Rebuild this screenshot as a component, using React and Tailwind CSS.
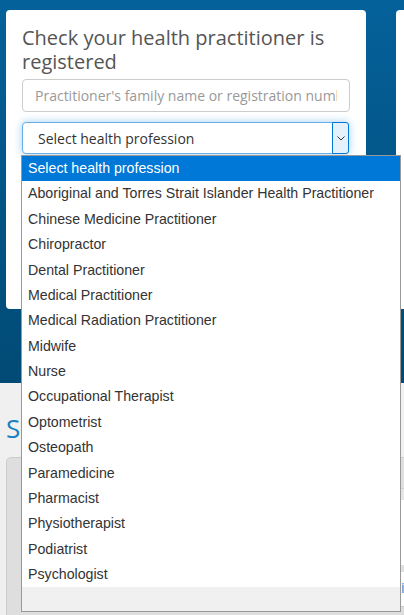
import React from "react";

const items = [
  "Select health profession",
  "Aboriginal and Torres Strait Islander Health Practitioner",
  "Chinese Medicine Practitioner",
  "Chiropractor",
  "Dental Practitioner",
  "Medical Practitioner",
  "Medical Radiation Practitioner",
  "Midwife",
  "Nurse",
  "Occupational Therapist",
  "Optometrist",
  "Osteopath",
  "Paramedicine",
  "Pharmacist",
  "Physiotherapist",
  "Podiatrist",
  "Psychologist",
];

export default function App() {
  return (
    <div className="relative w-[404px] h-[615px] overflow-hidden bg-[#f0f0f0] font-['Open_Sans',sans-serif]">
      {/* Blue hero band */}
      <div className="h-[383px] bg-gradient-to-b from-[#05619a] to-[#014a75] pt-[10px] pl-[6px] flex gap-[30px]">
        <div className="w-[360px] h-[299px] shrink-0 bg-white rounded-[4px] px-[16px] pt-[16px]">
          <h1 className="text-[20px] leading-[24px] text-[#555555] font-normal">
            Check your health practitioner is registered
          </h1>
          <div className="mt-[5px] h-[33px] w-[328px] border border-[#cccccc] rounded-[4px] flex items-center pl-[12px] pr-[12px]">
            <span className="block overflow-hidden text-[14px] text-[#999999] whitespace-nowrap">
              Practitioner's family name or registration number
            </span>
          </div>
          <div className="mt-[10px] h-[32px] w-[327px] border border-[#66afe9] rounded-[4px] flex items-center shadow-[0_0_8px_rgba(102,175,233,0.6)] bg-white">
            <span className="flex-1 pl-[15px] text-[14px] text-[#333333] whitespace-nowrap">
              Select health profession
            </span>
            <div className="w-[17px] h-[32px] -mr-px border border-[#0078d7] bg-[#e5f1fb] rounded-r-[3px] flex items-center justify-center">
              <svg width="8" height="5" viewBox="0 0 8 5">
                <path d="M0.5 0.5 L4 4 L7.5 0.5" fill="none" stroke="#333" strokeWidth="1" />
              </svg>
            </div>
          </div>
        </div>
        <div className="w-[40px] h-[299px] shrink-0 bg-white rounded-tl-[4px] rounded-bl-[4px]" />
      </div>

      {/* Lower grey section */}
      <div className="px-[6px]">
        <h2 className="mt-[30px] text-[26px] leading-[30px] text-[#1a7fc1] font-normal whitespace-nowrap">
          Search results
        </h2>
        <div className="mt-[14px] w-[420px] h-[200px] bg-[#dedede] border border-[#cccccc] rounded-[5px] pt-[30px] pl-[14px]">
          <div className="bg-white">
            <div className="h-[12px] bg-[#e6e6e6] border-t border-[#d0d0d0]" />
            <div className="h-[65px]" />
            <div className="h-[7px] bg-[#e0e0e0]" />
            <div className="h-[31px] flex items-center pl-[380px]">
              <span className="text-[14px] text-[#1a7fc1]">i</span>
            </div>
            <div className="h-[4px] bg-white border-b border-[#c8c8c8]" />
          </div>
        </div>
      </div>

      {/* Native select dropdown list overlay */}
      <div className="absolute left-[21px] top-[155px] w-[380px] h-[457px] bg-white border border-[#999999] flex flex-col font-['Liberation_Sans',Arial,sans-serif]">
        {items.map((it, i) => (
          <div
            key={it}
            className={
              "h-[25.375px] shrink-0 flex items-center pl-[6px] text-[14.2px] whitespace-nowrap " +
              (i === 0 ? "bg-[#0078d7] text-white" : "text-[#333333]")
            }
          >
            {it}
          </div>
        ))}
        <div className="flex-1 bg-[#f0f0f0]" />
      </div>
    </div>
  );
}
